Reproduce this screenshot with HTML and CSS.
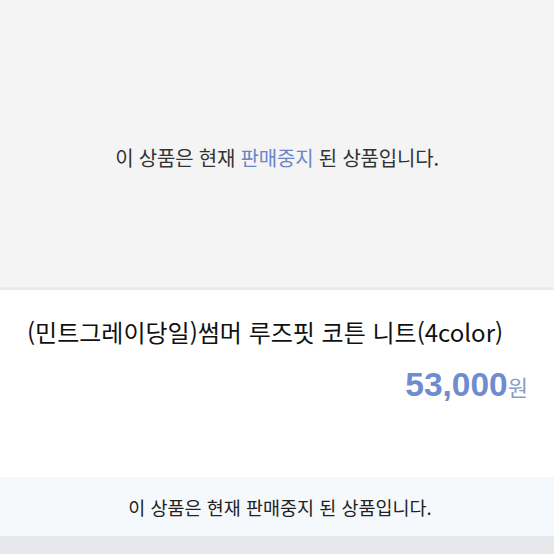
FILE: index.html
```html
<!DOCTYPE html>
<html lang="ko">
<head>
    <meta charset="UTF-8">
    <meta name="viewport" content="width=device-width, initial-scale=1.0">
    <title>판매중지 상품</title>
    <link rel="stylesheet" href="styles.css">
</head>
<body>
    <div class="page">
        <div class="image-area">
            <p class="notice">이 상품은 현재 <span class="accent">판매중지</span> 된 상품입니다.</p>
        </div>
        <div class="product-info">
            <h1 class="product-name">(민트그레이당일)썸머 루즈핏 코튼 니트(4color)</h1>
            <div class="price">
                <span class="amount">53,000</span><span class="unit">원</span>
            </div>
        </div>
        <div class="sold-out-bar">이 상품은 현재 판매중지 된 상품입니다.</div>
        <div class="bottom-strip"></div>
    </div>
</body>
</html>
```

FILE: styles.css
```css
body {
    margin: 0;
    font-family: 'Noto Sans CJK KR', 'Noto Sans', sans-serif;
    background-color: #fff;
    color: #222;
}
.page {
    display: flex;
    flex-direction: column;
    height: 554px;
}
.image-area {
    height: 259px;
    padding-top: 28px;
    background-color: #f4f4f4;
    border-bottom: 3px solid #ebebeb;
    display: flex;
    justify-content: center;
    align-items: center;
}
.notice {
    margin: 0;
    font-size: 20px;
    color: #333;
    letter-spacing: -0.2px;
}
.accent {
    color: #6a85c6;
}
.product-info {
    flex: 1;
    padding: 24px 26px 0 27px;
}
.product-name {
    margin: 0;
    font-size: 24px;
    font-weight: 400;
    line-height: 36px;
    color: #111;
}
.price {
    text-align: right;
    margin-top: 15px;
    line-height: 40px;
}
.amount {
    font-family: 'Liberation Sans', Arial, sans-serif;
    font-size: 33.5px;
    font-weight: 700;
    color: #6f8ccf;
}
.unit {
    font-size: 22px;
    color: #8a9bc4;
}
.sold-out-bar {
    height: 59px;
    background-color: #f6f9fc;
    display: flex;
    justify-content: center;
    align-items: center;
    padding-left: 6px;
    font-size: 18.5px;
    color: #222;
}
.bottom-strip {
    height: 18px;
    background-color: #e6e8eb;
}
```
